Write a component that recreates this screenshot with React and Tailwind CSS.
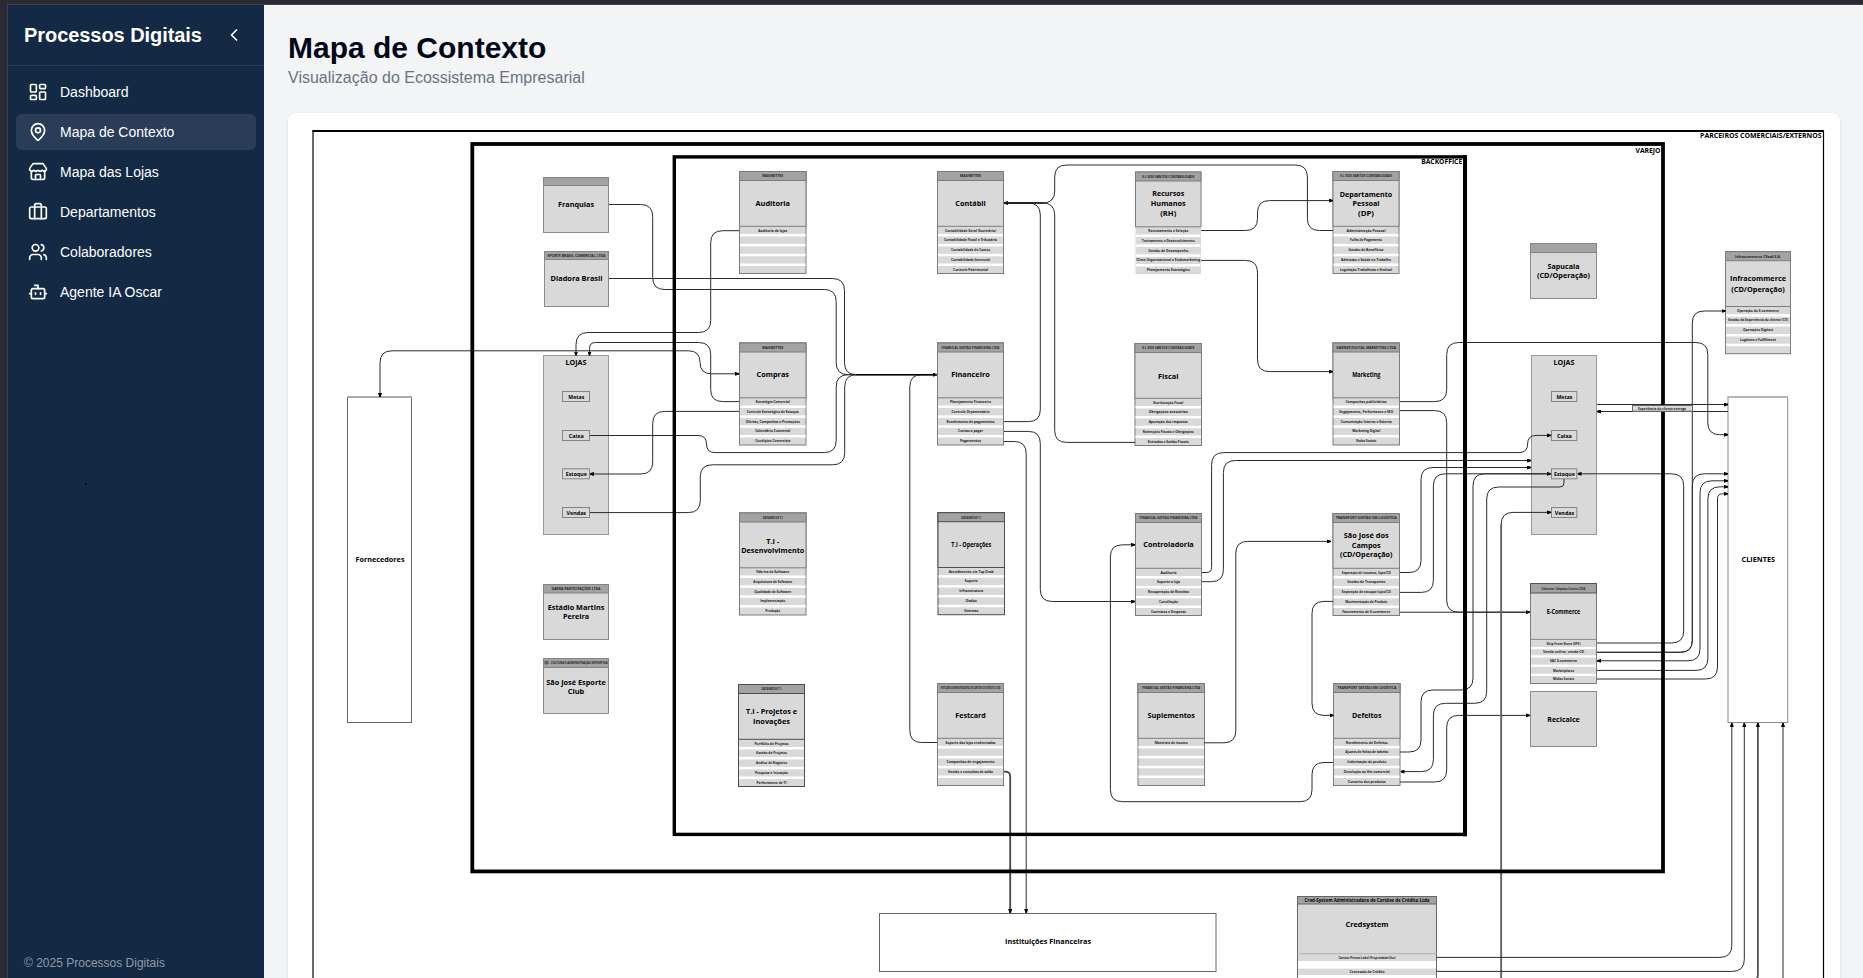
import React from "react";
import {
  LayoutDashboard,
  MapPin,
  Store,
  Users,
  Bot,
  ChevronLeft,
} from "lucide-react";

function SuitcaseIcon({ size = 20 }) {
  return (
    <svg width={size} height={size} viewBox="0 0 24 24" fill="none" stroke="currentColor" strokeWidth="2" strokeLinecap="round" strokeLinejoin="round">
      <path d="M16 20V4a2 2 0 0 0-2-2h-4a2 2 0 0 0-2 2v16" />
      <rect width="20" height="14" x="2" y="6" rx="2" />
    </svg>
  );
}

const NAV = [
  { label: "Dashboard", icon: LayoutDashboard },
  { label: "Mapa de Contexto", icon: MapPin, active: true },
  { label: "Mapa das Lojas", icon: Store },
  { label: "Departamentos", icon: SuitcaseIcon },
  { label: "Colaboradores", icon: Users },
  { label: "Agente IA Oscar", icon: Bot },
];

const ROW_TEXT_Y = [59.2, 68.4, 78.4, 88.2, 98.2];
const ROW_GAP_Y = [62.8, 72.7, 82.6, 92.3];

// x, y, width, header [text, width], title lines [text, centre offset, width], rows [text, width]
const DEPARTMENTS = [
  { x: 739.5, y: 171.5, w: 66.5, head: ["MAGNETTES", 21], title: [["Auditoria", 32, 34.5]], rows: [["Auditoria de lojas", 29], null, null, null, null] },
  { x: 937.5, y: 171.5, w: 66, head: ["MAGNETTES", 21], title: [["Contábil", 32, 30.5]], rows: [["Contabilidade Geral (Societária)", 51], ["Contabilidade Fiscal e Tributária", 53], ["Contabilidade de Custos", 39], ["Contabilidade Gerencial", 39], ["Controle Patrimonial", 35]] },
  { x: 1135.5, y: 172, w: 65.5, head: ["S L DOS SANTOS CONTABILIDADE", 52], title: [["Recursos", 21.5, 32], ["Humanos", 31.5, 35], ["(RH)", 41.5, 16]], rows: [["Recrutamento e Seleção", 40], ["Treinamento e Desenvolvimento", 53], ["Gestão de Desempenho", 40], ["Clima Organizacional e Endomarketing", 64], ["Planejamento Estratégico", 43]], open: true },
  { x: 1333, y: 171.5, w: 66, head: ["S L DOS SANTOS CONTABILIDADE", 52], title: [["Departamento", 23, 52.5], ["Pessoal", 32, 27], ["(DP)", 42, 16]], rows: [["Administração Pessoal", 39], ["Folha de Pagamento", 32], ["Gestão de Benefícios", 35], ["Admissão e Saúde no Trabalho", 50], ["Legislação Trabalhista e Sindical", 52]] },
  { x: 739.5, y: 343, w: 66.5, head: ["MAGNETTES", 21], title: [["Compras", 31.7, 32.5]], rows: [["Estratégia Comercial", 34], ["Controle Estratégico de Estoque", 52], ["Ofertas, Campanhas e Promoções", 54], ["Calendário Comercial", 35], ["Condições Comerciais", 35]] },
  { x: 937.5, y: 343, w: 66, head: ["FINANCIAL GESTÃO FINANCEIRA LTDA", 58], title: [["Financeiro", 31.7, 38.5]], rows: [["Planejamento Financeiro", 41], ["Controle Orçamentário", 38], ["Recebimento de pagamentos", 48], ["Contas a pagar", 25], ["Pagamentos", 21]] },
  { x: 1135, y: 343.5, w: 66.5, head: ["S L DOS SANTOS CONTABILIDADE", 52], title: [["Fiscal", 32.5, 20.5]], rows: [["Escrituração Fiscal", 30], ["Obrigações acessórias", 39], ["Apuração dos impostos", 39], ["Retenções Fiscais e Obrigações", 51], ["Entradas e Saídas Fiscais", 41]] },
  { x: 1333, y: 343, w: 66.5, head: ["GARNER DIGITAL MARKETING LTDA", 60], title: [["Marketing", 31.5, 28]], ts: 6.2, rows: [["Campanhas publicitárias", 41], ["Engajamento, Performance e SEO", 54], ["Comunicação Interna e Externa", 51], ["Marketing Digital", 28], ["Redes Sociais", 20]] },
  { x: 739.5, y: 513, w: 66.5, head: ["DATANEXUS T.I", 20], title: [["T.I -", 28, 13], ["Desenvolvimento", 37.5, 63]], rows: [["Fábrica de Software", 33], ["Arquitetura de Software", 39], ["Qualidade de Software", 37], ["Implementação", 25], ["Produção", 15]] },
  { x: 938, y: 512.7, w: 66.5, head: ["DATANEXUS T.I", 20], title: [["T.I - Operações", 31.7, 40]], ts: 6.2, dark: true, rows: [["Atendimento via Top Desk", 45], ["Suporte", 13], ["Infraestrutura", 24], ["Dados", 11], ["Sistemas", 14]] },
  { x: 1135.5, y: 513.5, w: 66, head: ["FINANCIAL GESTÃO FINANCEIRA LTDA", 58], title: [["Controladoria", 31.3, 50.5]], rows: [["Auditoria", 16], ["Suporte a loja", 23], ["Recuperação de Receitas", 41], ["Conciliação", 19], ["Contratos e Despesas", 35]] },
  { x: 1333, y: 513.5, w: 66.5, head: ["TRANSPORT GESTÃO EM LOGÍSTICA", 61], title: [["São José dos", 22, 45], ["Campos", 31.5, 29], ["(CD/Operação)", 41, 52.5]], rows: [["Separação de insumos, lojas/CD", 49], ["Gestão de Transportes", 38], ["Separação de estoque lojas/CD", 49], ["Movimentação de Produto", 42], ["Faturamento de E-commerce", 48]] },
  { x: 738.5, y: 684.5, w: 66, head: ["DATANEXUS T.I", 20], title: [["T.I - Projetos e", 27, 51], ["Inovações", 36.5, 37]], dark: true, rows: [["Portfólio de Projetos", 34], ["Gestão de Projetos", 31], ["Análise de Negócios", 31], ["Pesquisa e Inovação", 33], ["Performance de TI", 30]] },
  { x: 937.5, y: 683.5, w: 66, head: ["FESTCARD ADMINISTRADORA DE CARTÕES DE CRÉDITO LTDA", 60], title: [["Festcard", 31.8, 30.5]], rows: [["Suporte das lojas credenciadas", 50], null, ["Campanhas de engajamento", 48], ["Gestão e consultas de saldo", 45], null] },
  { x: 1138, y: 683.5, w: 66.5, head: ["FINANCIAL GESTÃO FINANCEIRA LTDA", 58], title: [["Suplementos", 32, 47.5]], rows: [["Materiais de insumo", 33], null, null, null, null] },
  { x: 1333.5, y: 683.5, w: 66.5, head: ["TRANSPORT GESTÃO EM LOGÍSTICA", 59], title: [["Defeitos", 32, 29.5]], rows: [["Recebimento de Defeitos", 42], ["Ajustes de faltas de tabelas", 43], ["Indenização do produto", 39], ["Devolução ao fim comercial", 46], ["Conserto dos produtos", 38]] },
  { x: 1725.5, y: 251.7, w: 65, head: ["Infracommerce CXaaS S.A.", 46], title: [["Infracommerce", 27, 56], ["(CD/Operação)", 37.8, 53.5]], rows: [["Operação do E-commerce", 42], ["Gestão da Experiência do cliente (CX)", 60], ["Operações Digitais", 30], ["Logística e Fulfillment", 36], null] },
];

const SIMPLE = [
  { x: 543.5, y: 177.5, w: 65, h: 55, hh: 8, title: [["Franquias", 27.3, 36]] },
  { x: 544.5, y: 251.5, w: 64, h: 55, hh: 8, head: ["SPORTS BRASIL COMERCIAL LTDA", 58], title: [["Diadora Brasil", 27.2, 52]] },
  { x: 543.5, y: 584.5, w: 65, h: 55, hh: 8.5, head: ["GARRA PARTICIPAÇÕES LTDA", 49], title: [["Estádio Martins", 22.6, 56.5], ["Pereira", 32, 26]] },
  { x: 543.5, y: 658.5, w: 65, h: 55, hh: 9, head: ["SJE - CULTURA E ADMINISTRAÇÃO ESPORTIVA", 63], title: [["São José Esporte", 23.5, 59.5], ["Club", 33, 16.5]] },
  { x: 1530.5, y: 243.5, w: 66, h: 55, hh: 9, title: [["Sapucaia", 22.7, 32], ["(CD/Operação)", 32, 53]] },
  { x: 1530.5, y: 691.5, w: 66, h: 55, hh: 0, title: [["Recicalce", 27.5, 32.5]] },
];

// Orthogonal connectors: points, optional line width, arrow ends and corner radius
const LINKS = [
  { p: [609, 204.5, 652.7, 204.5, 652.7, 289.5, 836.2, 289.5, 836.2, 374.7, 937, 374.7] },
  { p: [609, 278.5, 844.5, 278.5, 844.5, 374.7, 937, 374.7] },
  { p: [739, 230.7, 710.7, 230.7, 710.7, 332.5, 576, 332.5, 576, 355.5], end: 1 },
  { p: [739, 401.6, 710.7, 401.6, 710.7, 342.5, 589.5, 342.5, 589.5, 355.5], end: 1, r: [12, 12, 6] },
  { p: [380, 397, 380, 350.8, 700, 350.8, 700, 373.8, 739, 373.8], start: 1, end: 1 },
  { p: [739, 411.4, 652.7, 411.4, 652.7, 474, 590, 474], end: 1 },
  { p: [590, 435.5, 706.5, 435.5, 706.5, 452.6, 836.2, 452.6, 836.2, 374.7, 937, 374.7], end: 1 },
  { p: [590, 512.6, 700.3, 512.6, 700.3, 464.8, 844.7, 464.8, 844.7, 374.7, 937, 374.7] },
  { p: [937, 742.5, 909.8, 742.5, 909.8, 374.7, 937, 374.7] },
  { p: [1004, 421.6, 1040.3, 421.6, 1040.3, 203, 1004, 203], end: 1 },
  { p: [1135, 442.4, 1054.7, 442.4, 1054.7, 203, 1004, 203] },
  { p: [1333, 230.5, 1307.4, 230.5, 1307.4, 165, 1054.7, 165, 1054.7, 203, 1004, 203] },
  { p: [1004, 431.4, 1040.3, 431.4, 1040.3, 601.5, 1135, 601.5], end: 1 },
  { p: [1004, 441.5, 1026.2, 441.5, 1026.2, 913], end: 1 },
  { p: [1004, 771.6, 1010.2, 771.6, 1010.2, 913], end: 1, r: [5], sw: 1.8, c: "#444" },
  { p: [1201, 230.5, 1257.5, 230.5, 1257.5, 200.6, 1333, 200.6], end: 1 },
  { p: [1201, 260.4, 1257.5, 260.4, 1257.5, 371.6, 1333, 371.6], end: 1 },
  { p: [1400, 401.6, 1446.7, 401.6, 1446.7, 342.5, 1707.8, 342.5, 1707.8, 434.7, 1728, 434.7], end: 1 },
  { p: [1400, 410.6, 1446.7, 410.6, 1446.7, 612.2, 1530, 612.2], end: 1 },
  { p: [1400, 612.2, 1530, 612.2] },
  { p: [1202, 572.5, 1211.6, 572.5, 1211.6, 452.6, 1527.6, 452.6, 1527.6, 435.4, 1551, 435.4], end: 1, r: [5, 12, 9, 9] },
  { p: [1202, 581.7, 1223.4, 581.7, 1223.4, 460.5, 1531, 460.5], end: 1 },
  { p: [1400, 572.5, 1421, 572.5, 1421, 467.5, 1531, 467.5], end: 1 },
  { p: [1400, 592.4, 1433.4, 592.4, 1433.4, 473.8, 1551, 473.8], end: 1 },
  { p: [1333, 601.4, 1312, 601.4, 1312, 715.4, 1333.5, 715.4], end: 1 },
  { p: [1204, 742.8, 1235.8, 742.8, 1235.8, 541.4, 1331, 541.4], end: 1 },
  { p: [1333, 762.5, 1312, 762.5, 1312, 801.7, 1110.4, 801.7, 1110.4, 544.8, 1135, 544.8], end: 1 },
  { p: [1400, 752, 1421, 752, 1421, 690, 1473, 690, 1473, 473.8, 1551, 473.8] },
  { p: [1400.5, 771.6, 1433.4, 771.6, 1433.4, 703.3, 1486.7, 703.3, 1486.7, 487, 1564, 487, 1564, 479], start: 1, r: [12, 12, 12, 12, 4] },
  { p: [1400, 782, 1446.7, 782, 1446.7, 715.4, 1530, 715.4], end: 1 },
  { p: [1501.2, 980, 1501.2, 512.4, 1551, 512.4], end: 1 },
  { p: [1501.2, 980, 1501.2, 524], sw: 1.8, c: "#666" },
  { p: [1597, 643, 1683.7, 643, 1683.7, 473.8, 1577.5, 473.8], end: 1 },
  { p: [1597, 652.3, 1692.3, 652.3, 1692.3, 311, 1725.5, 311], end: 1 },
  { p: [1597, 652.3, 1692.3, 652.3, 1692.3, 473.8, 1728, 473.8], end: 1 },
  { p: [1597, 660.8, 1700, 660.8, 1700, 480.8, 1728, 480.8], start: 1, end: 1 },
  { p: [1597, 670.4, 1707.9, 670.4, 1707.9, 486.8, 1728, 486.8], end: 1 },
  { p: [1597, 679, 1717.5, 679, 1717.5, 493.8, 1728, 493.8], end: 1, r: [12, 5] },
  { p: [1597, 404.5, 1728, 404.5], end: 1 },
  { p: [1728, 411.5, 1597, 411.5], end: 1 },
  { p: [1436.5, 957.4, 1731.8, 957.4, 1731.8, 723], end: 1 },
  { p: [1436.5, 971.4, 1744.3, 971.4, 1744.3, 723], end: 1 },
  { p: [1750, 984, 1757.9, 979, 1757.9, 723], end: 1, sw: 1.8, r: [4], c: "#555" },
  { p: [1783, 980, 1783, 723], end: 1 },
];

function roundedPath(p, radii) {
  const pts = [];
  for (let i = 0; i < p.length; i += 2) pts.push([p[i], p[i + 1]]);
  let d = `M${pts[0][0]} ${pts[0][1]}`;
  for (let i = 1; i < pts.length - 1; i++) {
    const [ax, ay] = pts[i - 1];
    const [bx, by] = pts[i];
    const [cx, cy] = pts[i + 1];
    const l1 = Math.hypot(bx - ax, by - ay);
    const l2 = Math.hypot(cx - bx, cy - by);
    const want = radii ? radii[i - 1] ?? 12 : 12;
    const r = Math.min(want, i === 1 ? l1 : l1 / 2, i === pts.length - 2 ? l2 : l2 / 2);
    d += `L${bx - ((bx - ax) / l1) * r} ${by - ((by - ay) / l1) * r}`;
    d += `Q${bx} ${by} ${bx + ((cx - bx) / l2) * r} ${by + ((cy - by) / l2) * r}`;
  }
  const last = pts[pts.length - 1];
  return d + `L${last[0]} ${last[1]}`;
}

function Label({ x, y, w, size = 7.4, weight = 700, fill = "#000", children }) {
  return (
    <text x={x} y={y + size * 0.36} textAnchor="middle" fontSize={size} fontWeight={weight} fill={fill} textLength={w} lengthAdjust="spacingAndGlyphs">
      {children}
    </text>
  );
}

function Department({ x, y, w, head, title, rows, ts, open, dark }) {
  const stroke = dark ? "#4d4d4d" : "#7c7c7c";
  const cx = x + w / 2;
  return (
    <g>
      <rect x={x} y={y} width={w} height="102" fill="#d9d9d9" stroke={open ? "none" : stroke} />
      {ROW_GAP_Y.map((g) => (
        <rect key={g} x={x + 0.5} y={y + g - 0.3} width={w - 1} height="2.5" fill="#fff" />
      ))}
      <rect x={x} y={y} width={w} height="54.8" fill="#d9d9d9" stroke={stroke} />
      <rect x={x} y={y} width={w} height="9" fill="#a3a3a3" stroke={stroke} />
      <Label x={cx} y={y + 4.7} w={head[1]} size={3.2} fill="#222">{head[0]}</Label>
      {title.map((t) => (
        <Label key={t[0]} x={cx} y={y + t[1]} w={t[2]} size={ts}>{t[0]}</Label>
      ))}
      {rows.map((r, i) =>
        r ? <Label key={i} x={cx} y={y + ROW_TEXT_Y[i]} w={r[1]} size={3.5} fill="#1a1a1a">{r[0]}</Label> : null
      )}
    </g>
  );
}

function SimpleBox({ x, y, w, h, hh, head, title }) {
  return (
    <g>
      <rect x={x} y={y} width={w} height={h} fill="#d9d9d9" stroke="#8c8c8c" />
      {hh > 0 && <rect x={x} y={y} width={w} height={hh} fill="#a3a3a3" stroke="#858585" />}
      {head && <Label x={x + w / 2} y={y + 4.4} w={head[1]} size={3.2} fill="#222">{head[0]}</Label>}
      {title.map((t) => (
        <Label key={t[0]} x={x + w / 2} y={y + t[1]} w={t[2]}>{t[0]}</Label>
      ))}
    </g>
  );
}

const STORE_ITEMS = [["Metas", 391.5, 16], ["Caixa", 430.5, 15], ["Estoque", 468.8, 21], ["Vendas", 507.5, 19.5]];

function StoreBlock({ x, w, ix, iw }) {
  return (
    <g>
      <rect x={x} y="355.5" width={w} height="179" fill="#d9d9d9" stroke="#999" />
      <Label x={x + w / 2} y={362.7} w={21}>LOJAS</Label>
      {STORE_ITEMS.map(([t, y, tw]) => (
        <g key={t}>
          <rect x={ix} y={y} width={iw} height="10" fill="#d9d9d9" stroke="#858585" />
          <Label x={ix + iw / 2 + 0.3} y={y + 5.2} w={tw} size={6}>{t}</Label>
        </g>
      ))}
    </g>
  );
}

function ContextMap() {
  return (
    <svg className="block w-full font-['Open_Sans',sans-serif]" viewBox="288 113 1552 865">
      <defs>
        <marker id="arrow" viewBox="0 0 6 6" refX="6" refY="3" markerWidth="4" markerHeight="4" markerUnits="userSpaceOnUse" orient="auto-start-reverse">
          <path d="M0 0L6 2V4L0 6Z" fill="#000" />
        </marker>
      </defs>

      <path d="M313 980V131" stroke="#444" strokeWidth="1.6" fill="none" />
      <path d="M312.3 131H1823.9" stroke="#000" strokeWidth="2" fill="none" />
      <path d="M1823.5 131V980" stroke="#000" strokeWidth="1.2" fill="none" />
      <rect x="879.5" y="913.5" width="336.5" height="58" fill="#fff" stroke="#666" />
      <Label x={1048} y={941.7} w={86}>Instituições Financeiras</Label>

      <g>
        <rect x="1297.5" y="896.5" width="139" height="90" fill="#d9d9d9" stroke="#666" />
        <rect x="1298" y="961" width="138" height="7.6" fill="#fff" />
        <rect x="1298" y="975" width="138" height="8" fill="#fff" />
        <path d="M1297 953.7H1437" stroke="#b0b0b0" />
        <rect x="1297.5" y="896.5" width="139" height="7.5" fill="#a3a3a3" stroke="#666" />
        <Label x={1367} y={900.5} w={125} size={4.6}>Cred-System Administradora de Cartões de Crédito Ltda</Label>
        <Label x={1367} y={924.6} w={43}>Credsystem</Label>
        <Label x={1367} y={957.8} w={57} size={3.5} fill="#1a1a1a">Cartões Private Label (Propriedade/Uso)</Label>
        <Label x={1367} y={971.8} w={35} size={3.5} fill="#1a1a1a">Concessão de Crédito</Label>
      </g>

      <rect x="347.5" y="397" width="64" height="325.5" fill="#fff" stroke="#666" />
      <path d="M347 397H412" stroke="#aaa" strokeWidth="2" />
      <Label x={380} y={559.5} w={49}>Fornecedores</Label>
      <rect x="1728" y="397" width="59.7" height="325.5" fill="#fff" stroke="#888" />
      <path d="M1727.6 397H1788" stroke="#b4b4b4" strokeWidth="2" />
      <Label x={1758.3} y={559.5} w={33.5}>CLIENTES</Label>

      {SIMPLE.map((b) => <SimpleBox key={b.title[0][0]} {...b} />)}
      {DEPARTMENTS.map((b) => <Department key={b.x + "-" + b.y} {...b} />)}
      <StoreBlock x={543.5} w={65} ix={562.5} iw={27} />
      <StoreBlock x={1531.5} w={65} ix={1551.5} iw={25.3} />

      <g>
        <rect x="1530.5" y="583.5" width="66" height="100" fill="#d9d9d9" stroke="#7c7c7c" />
        {[647, 655.3, 664.6, 673.7].map((y) => <rect key={y} x="1531" y={y} width="65" height="2.2" fill="#fff" />)}
        <path d="M1530 639.4H1597" stroke="#888" />
        <rect x="1530.5" y="583.5" width="66" height="9.5" fill="#a3a3a3" stroke="#555" />
        <Label x={1563.5} y={588.7} w={44} size={3.2} fill="#222">Calcenter Calçados Centro LTDA</Label>
        <Label x={1563.5} y={612.2} w={33.5} size={6.2}>E-Commerce</Label>
        <Label x={1563.5} y={643.6} w={34} size={4} fill="#1a1a1a">Ship From Store (SFS)</Label>
        <Label x={1563.5} y={652} w={41} size={3.5} fill="#1a1a1a">Venda online, venda CD</Label>
        <Label x={1563.5} y={661} w={27} size={3.5} fill="#1a1a1a">SAC E-commerce</Label>
        <Label x={1563.5} y={671} w={21} size={3.5} fill="#1a1a1a">Marketplaces</Label>
        <Label x={1563.5} y={679} w={21} size={3.5} fill="#1a1a1a">Mídias Sociais</Label>
      </g>

      {LINKS.map((l, i) => (
        <path
          key={i}
          d={roundedPath(l.p, l.r)}
          fill="none"
          stroke={l.c || "#2b2b2b"}
          strokeWidth={l.sw || 1}
          markerEnd={l.end ? "url(#arrow)" : undefined}
          markerStart={l.start ? "url(#arrow)" : undefined}
        />
      ))}
      <path d="M856 374.7H935M1006 203H1044" stroke="#000" strokeWidth="1.2" />

      <rect x="472.3" y="144" width="1190.7" height="727.4" fill="none" stroke="#000" strokeWidth="3.8" />
      <rect x="674.3" y="156.9" width="790.7" height="677.5" fill="none" stroke="#000" strokeWidth="3.4" />
      <path d="M1465 155.2V836.2" stroke="#000" strokeWidth="4" />
      <Label x={1760.8} y={135.8} w={121.5} size={6.3}>PARCEIROS COMERCIAIS/EXTERNOS</Label>
      <Label x={1648} y={150.5} w={25} size={7}>VAREJO</Label>
      <Label x={1441.7} y={162} w={41} size={6.3}>BACKOFFICE</Label>

      <rect x="1632.5" y="405.5" width="60" height="5.8" fill="#d9d9d9" stroke="#666" />
      <Label x={1662} y={408.3} w={48} size={3.5} fill="#1a1a1a">Experiência do cliente entrega</Label>
    </svg>
  );
}

function Sidebar() {
  return (
    <aside className="relative flex w-[257px] shrink-0 flex-col border-l border-[#3d3f4a] bg-[#132944] text-white">
      <div className="flex h-[61px] items-center justify-between border-b border-[#273c58] pl-4 pr-5">
        <h2 className="text-xl font-bold tracking-[-0.06px]">Processos Digitais</h2>
        <ChevronLeft size={20} />
      </div>
      <nav className="flex flex-1 flex-col gap-1 px-2 py-2">
        {NAV.map(({ label, icon: Icon, active }) => (
          <a key={label} className={active ? "flex h-9 items-center gap-3 rounded-md bg-[#293d58] px-3 text-sm" : "flex h-9 items-center gap-3 rounded-md px-3 text-sm"}>
            <Icon size={20} />
            <span>{label}</span>
          </a>
        ))}
      </nav>
      <span className="absolute left-[77px] top-[478px] h-0.5 w-0.5 bg-[#06101c]" />
      <div className="px-4 pb-[7px] text-xs leading-4 text-[#8f9baa]">© 2025 Processos Digitais</div>
    </aside>
  );
}

export default function App() {
  return (
    <div className="flex h-screen flex-col overflow-hidden bg-[#2b2a33] pl-[7px] font-['Liberation_Sans',Arial,sans-serif]">
      <div className="h-[5px] shrink-0 border-b border-[#42414a]" />
      <div className="flex min-h-0 flex-1">
        <Sidebar />
        <main className="min-w-0 flex-1 overflow-hidden bg-[#f3f4f6] pl-6 pr-[23px] pt-[25px]">
          <h1 className="text-3xl font-bold text-[#020817]">Mapa de Contexto</h1>
          <p className="text-base text-[#6b7280]">Visualização do Ecossistema Empresarial</p>
          <section className="mt-[23px] h-[900px] overflow-hidden rounded-lg bg-white shadow-sm">
            <ContextMap />
          </section>
        </main>
      </div>
    </div>
  );
}
